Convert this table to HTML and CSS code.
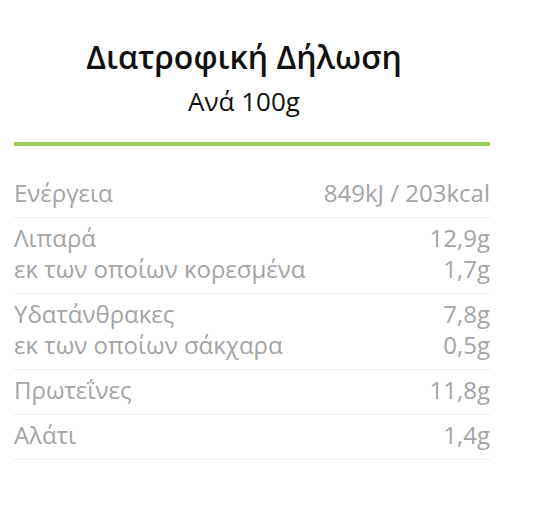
FILE: index.html
```html
<!DOCTYPE html>
<html lang="el">
<head>
    <meta charset="UTF-8">
    <meta name="viewport" content="width=device-width, initial-scale=1.0">
    <title>Διατροφική Δήλωση</title>
    <link rel="stylesheet" href="styles.css">
</head>
<body>

<div class="panel">
    <!-- Heading -->
    <div class="head">
        <h1>Διατροφική Δήλωση</h1>
        <p class="per">Ανά 100g</p>
    </div>

    <!-- Nutrition rows -->
    <div class="facts">
        <div class="group">
            <div class="line"><span>Ενέργεια</span><span>849kJ / 203kcal</span></div>
        </div>
        <div class="group">
            <div class="line"><span>Λιπαρά</span><span>12,9g</span></div>
            <div class="line"><span>εκ των οποίων κορεσμένα</span><span>1,7g</span></div>
        </div>
        <div class="group">
            <div class="line"><span>Υδατάνθρακες</span><span>7,8g</span></div>
            <div class="line"><span>εκ των οποίων σάκχαρα</span><span>0,5g</span></div>
        </div>
        <div class="group">
            <div class="line"><span>Πρωτεΐνες</span><span>11,8g</span></div>
        </div>
        <div class="group">
            <div class="line"><span>Αλάτι</span><span>1,4g</span></div>
        </div>
    </div>
</div>

</body>
</html>
```

FILE: styles.css
```css
body {
    margin: 0;
    background-color: #fff;
    font-family: 'Open Sans', 'DejaVu Sans', sans-serif;
}
.panel {
    width: 476px;
    margin-left: 14px;
    padding-top: 35px;
}
.head {
    padding-right: 16px;
    padding-bottom: 26px;
    text-align: center;
    border-bottom: 4px solid #9dcc5b;
}
h1 {
    margin: 0;
    font-size: 32px;
    font-weight: 600;
    line-height: 44px;
    color: #111;
}
.per {
    margin: 0;
    padding-top: 7px;
    font-size: 26px;
    line-height: 30px;
    color: #111;
}
.facts {
    padding-top: 27px;
}
.group {
    padding: 4px 0 9px;
    border-bottom: 1px solid #ececec;
}
.line {
    display: flex;
    justify-content: space-between;
    font-size: 24px;
    line-height: 31px;
    color: #a4a4a4;
}
```
